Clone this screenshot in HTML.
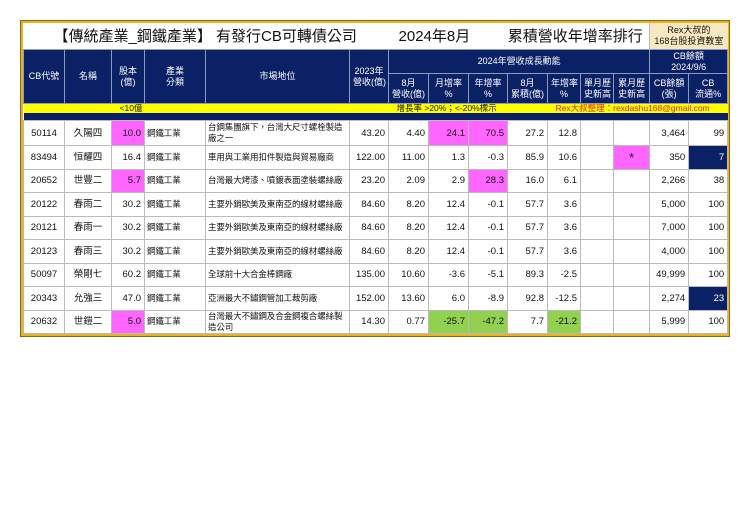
<!DOCTYPE html>
<html><head><meta charset="utf-8"><style>
body{margin:0;background:#fff;width:740px;height:523px;position:relative;font-family:"Liberation Sans","Noto Sans CJK TC",sans-serif;}
.box{position:absolute;left:21px;top:21px;width:704px;border:2px solid #e8b31c;outline:1px solid #8a6a10;}
table{border-collapse:collapse;table-layout:fixed;width:704px;}
td{padding:0 3px;font-size:9.5px;color:#111;border:1px solid #bbb;white-space:nowrap;overflow:hidden;line-height:11px}
.t td{border:none;font-size:15px;height:26px;}
.h td{background:#0b2166;color:#fff;border:1px solid #8c9ac0;text-align:center;font-size:9px;}
.y td{background:#ffff00;border:none;height:9px;font-size:8.5px;line-height:9px}
.n td{background:#0b2166;border:none;height:7px}
.d td{height:22.5px;text-align:right}
.d td.c{text-align:center}.d td.l{text-align:left;white-space:normal;font-size:8.5px;padding:0 1px 0 2px;letter-spacing:-0.1px}
.p{background:#ff66ff}.g{background:#92d050}.b{background:#0b2166;color:#fff!important}
</style></head><body>
<div class="box"><table>
<colgroup><col style="width:41px"><col style="width:47px"><col style="width:33px"><col style="width:61px"><col style="width:144px"><col style="width:39px"><col style="width:40px"><col style="width:40px"><col style="width:39px"><col style="width:40px"><col style="width:33px"><col style="width:33px"><col style="width:36px"><col style="width:39px"><col style="width:39px"></colgroup>
<tr class="t"><td colspan="13" style="padding-left:30px">【傳統產業_鋼鐵產業】 有發行CB可轉債公司 &nbsp; &nbsp; &nbsp; &nbsp; &nbsp;2024年8月 &nbsp; &nbsp; &nbsp; &nbsp; 累積營收年增率排行</td><td colspan="2" style="background:#f8e8c0;font-size:9px;text-align:center;line-height:11px;border-left:1px solid #bbb">Rex大叔的<br>168台股投資教室</td></tr>
<tr class="h" style="height:24px"><td rowspan="2">CB代號</td><td rowspan="2">名稱</td><td rowspan="2">股本<br>(億)</td><td rowspan="2">產業<br>分類</td><td rowspan="2">市場地位</td><td rowspan="2">2023年<br>營收(億)</td><td colspan="7">2024年營收成長動能</td><td colspan="2">CB餘額<br>2024/9/6</td></tr>
<tr class="h" style="height:30px"><td>8月<br>營收(億)</td><td>月增率<br>%</td><td>年增率<br>%</td><td>8月<br>累積(億)</td><td>年增率<br>%</td><td>單月歷<br>史新高</td><td>累月歷<br>史新高</td><td>CB餘額<br>(張)</td><td>CB<br>流通%</td></tr>
<tr class="y"><td colspan="2"></td><td colspan="3" style="padding-left:8px">&lt;10億</td><td></td><td colspan="4" style="padding-left:8px">增長率 &gt;20%；&lt;-20%標示</td><td colspan="5" style="color:#e02020;padding-left:8px">Rex大叔整理：rexdashu168@gmail.com</td></tr>
<tr class="n"><td colspan="15"></td></tr>
<tr class="d" style="height:25px"><td class="c">50114</td><td class="c">久陽四</td><td class="p">10.0</td><td class="l">鋼鐵工業</td><td class="l">台鋼集團旗下，台灣大尺寸螺栓製造廠之一</td><td>43.20</td><td>4.40</td><td class="p">24.1</td><td class="p">70.5</td><td>27.2</td><td>12.8</td><td></td><td></td><td>3,464</td><td>99</td></tr>
<tr class="d"><td class="c">83494</td><td class="c">恒耀四</td><td>16.4</td><td class="l">鋼鐵工業</td><td class="l">車用與工業用扣件製造與貿易廠商</td><td>122.00</td><td>11.00</td><td>1.3</td><td>-0.3</td><td>85.9</td><td>10.6</td><td></td><td class="p c" style="font-size:13px">*</td><td>350</td><td class="b">7</td></tr>
<tr class="d"><td class="c">20652</td><td class="c">世豐二</td><td class="p">5.7</td><td class="l">鋼鐵工業</td><td class="l">台灣最大烤漆、噴鍍表面塗裝螺絲廠</td><td>23.20</td><td>2.09</td><td>2.9</td><td class="p">28.3</td><td>16.0</td><td>6.1</td><td></td><td></td><td>2,266</td><td>38</td></tr>
<tr class="d"><td class="c">20122</td><td class="c">春雨二</td><td>30.2</td><td class="l">鋼鐵工業</td><td class="l">主要外銷歐美及東南亞的線材螺絲廠</td><td>84.60</td><td>8.20</td><td>12.4</td><td>-0.1</td><td>57.7</td><td>3.6</td><td></td><td></td><td>5,000</td><td>100</td></tr>
<tr class="d"><td class="c">20121</td><td class="c">春雨一</td><td>30.2</td><td class="l">鋼鐵工業</td><td class="l">主要外銷歐美及東南亞的線材螺絲廠</td><td>84.60</td><td>8.20</td><td>12.4</td><td>-0.1</td><td>57.7</td><td>3.6</td><td></td><td></td><td>7,000</td><td>100</td></tr>
<tr class="d"><td class="c">20123</td><td class="c">春雨三</td><td>30.2</td><td class="l">鋼鐵工業</td><td class="l">主要外銷歐美及東南亞的線材螺絲廠</td><td>84.60</td><td>8.20</td><td>12.4</td><td>-0.1</td><td>57.7</td><td>3.6</td><td></td><td></td><td>4,000</td><td>100</td></tr>
<tr class="d"><td class="c">50097</td><td class="c">榮剛七</td><td>60.2</td><td class="l">鋼鐵工業</td><td class="l">全球前十大合金棒鋼廠</td><td>135.00</td><td>10.60</td><td>-3.6</td><td>-5.1</td><td>89.3</td><td>-2.5</td><td></td><td></td><td>49,999</td><td>100</td></tr>
<tr class="d"><td class="c">20343</td><td class="c">允強三</td><td>47.0</td><td class="l">鋼鐵工業</td><td class="l">亞洲最大不鏽鋼管加工裁剪廠</td><td>152.00</td><td>13.60</td><td>6.0</td><td>-8.9</td><td>92.8</td><td>-12.5</td><td></td><td></td><td>2,274</td><td class="b">23</td></tr>
<tr class="d"><td class="c">20632</td><td class="c">世鎧二</td><td class="p">5.0</td><td class="l">鋼鐵工業</td><td class="l">台灣最大不鏽鋼及合金鋼複合螺絲製造公司</td><td>14.30</td><td>0.77</td><td class="g">-25.7</td><td class="g">-47.2</td><td>7.7</td><td class="g">-21.2</td><td></td><td></td><td>5,999</td><td>100</td></tr>
</table></div>
</body></html>
